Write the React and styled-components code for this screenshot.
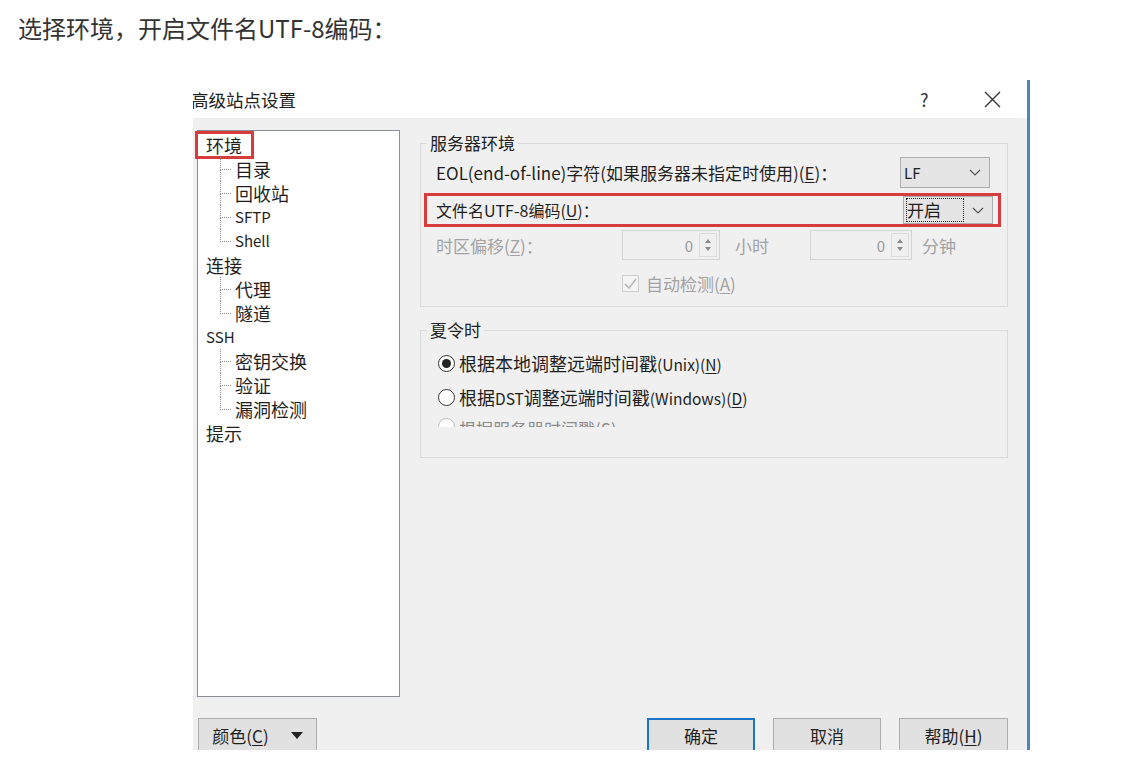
import styled, { createGlobalStyle } from "styled-components";

const GlobalStyle = createGlobalStyle`
  html, body {
    margin: 0;
    background: #fff;
  }
  body {
    font-family: "Noto Sans CJK SC", "Noto Sans", sans-serif;
    color: #1f1f1f;
  }
`;

const Intro = styled.p`
  margin: 0;
  padding: 13px 0 0 18px;
  height: 67px;
  font-size: 24px;
  line-height: 30px;
  color: #333;
`;

const Shot = styled.div`
  margin-left: 193px;
  width: 837px;
  height: 670px;
  display: flex;
  flex-direction: column;
  box-sizing: border-box;
  border-right: 3px solid #4a86bf;
  overflow: hidden;
`;

const TitleBar = styled.div`
  height: 38px;
  flex: none;
  display: flex;
  align-items: center;
  background: #fff;
  font-size: 17.5px;
  color: #222;
  span.title {
    margin-left: -2px;
    flex: 1;
  }
`;

const HelpMark = styled.span`
  width: 64px;
  font-size: 18px;
  color: #333;
`;

const CloseBox = styled.span`
  width: 43px;
  display: flex;
  align-items: center;
`;

const Body = styled.div`
  flex: 1;
  background: #f0f0f0;
  display: grid;
  grid-template-columns: 203px minmax(0, 1fr);
  grid-template-rows: 567px auto;
  column-gap: 20px;
  row-gap: 21px;
  padding: 12px 19px 0 4px;
  overflow: hidden;
`;

const TreeBox = styled.div`
  background: #fff;
  border: 1px solid #8a8f96;
  padding: 2px 0 0 8px;
  font-size: 18px;
  line-height: 24px;
`;

const TreeRow = styled.div`
  height: 24px;
  display: flex;
  align-items: stretch;
  white-space: nowrap;
  span.t {
    display: flex;
    align-items: center;
    font-size: ${(p) => (p.$latin ? 15 : 18)}px;
  }
`;

const Marked = styled.span`
  line-height: 22px;
  padding: 0 9px 0 8px;
  margin: 0 -9px 0 -8px;
  outline: 3px solid #d83b3b;
  align-self: center;
`;

const Branch = styled.span`
  width: 11px;
  margin: 0 4px 0 14px;
  display: flex;
  flex-direction: column;
  i {
    flex: 1;
    border-left: 1px dotted #8e8e8e;
  }
  i:first-child {
    border-bottom: 1px dotted #8e8e8e;
  }
  i:last-child {
    border-left-color: ${(p) => (p.$last ? "transparent" : "#8e8e8e")};
  }
`;

const Panel = styled.div`
  display: flex;
  flex-direction: column;
  font-size: 17px;
  min-width: 0;
`;

const Group = styled.fieldset`
  margin: ${(p) => p.$top || 0}px 0 0;
  padding: 0 0 ${(p) => p.$bottom || 0}px;
  border: 1px solid #dadada;
  min-width: 0;
  legend {
    margin-left: 6px;
    padding: 0 3px;
    font-size: 17px;
    line-height: 26px;
    color: #222;
  }
`;

const Row = styled.div`
  display: flex;
  align-items: center;
  height: ${(p) => p.$h || 31}px;
  margin-top: ${(p) => p.$mt || 0}px;
  padding: 0 17px 0 15px;
  color: ${(p) => (p.$disabled ? "#a3a3a3" : "#1f1f1f")};
  white-space: nowrap;
`;

const Flagged = styled.div`
  display: flex;
  align-items: center;
  height: 34px;
  box-sizing: border-box;
  margin: 5px 6px 0 3px;
  padding: 0 5px 0 9px;
  border: 3px solid #d83b3b;
  white-space: nowrap;
  font-size: 16px;
`;

const Grow = styled.span`
  flex: 1;
`;

const Key = styled.span`
  text-decoration: underline;
  text-underline-offset: 2px;
`;

const Combo = styled.div`
  width: 90px;
  height: ${(p) => p.$h || 31}px;
  flex: none;
  box-sizing: border-box;
  border: 1px solid #adadad;
  background: #e5e5e5;
  display: flex;
  align-items: center;
  justify-content: space-between;
  padding: 0 8px 0 3px;
  font-size: 15px;
`;

const Focused = styled.span`
  font-size: 17px;
  line-height: 22px;
  padding: 0 4px 0 0;
  outline: 1px dotted #222;
  width: 52px;
`;

const LabelCell = styled.span`
  width: 186px;
  flex: none;
`;

const Spin = styled.div`
  width: ${(p) => p.$w}px;
  height: 30px;
  flex: none;
  box-sizing: border-box;
  border: 1px solid #d4d4d4;
  background: #f0f0f0;
  display: flex;
  align-items: center;
  justify-content: flex-end;
  gap: 6px;
  padding-right: 2px;
  color: #9a9a9a;
  font-size: 15px;
`;

const SpinArrows = styled.span`
  width: 16px;
  height: 22px;
  border: 1px solid #dcdcdc;
  display: flex;
  align-items: center;
  justify-content: center;
`;

const UnitCell = styled.span`
  width: ${(p) => p.$w}px;
  padding-left: ${(p) => p.$pad}px;
  box-sizing: border-box;
  font-size: 17px;
  flex: none;
`;

const CheckRow = styled.div`
  display: flex;
  align-items: center;
  gap: 7px;
  height: 24px;
  margin-top: 11px;
  padding-left: 201px;
  color: #a3a3a3;
  font-size: 17px;
`;

const CheckBox = styled.span`
  width: 15px;
  height: 15px;
  border: 1px solid #cfcfcf;
  background: #f4f4f4;
  display: flex;
  align-items: center;
  justify-content: center;
`;

const RadioRow = styled.div`
  display: flex;
  align-items: center;
  gap: 4px;
  height: 34px;
  padding-left: 17px;
  font-size: 18px;
  white-space: nowrap;
  color: #1f1f1f;
  small {
    font-size: 15.5px;
  }
`;

const CutRow = styled.div`
  height: 34px;
  padding-left: 17px;
  overflow: hidden;
`;

const CutInner = styled.div`
  height: 9px;
  margin-top: 4px;
  overflow: hidden;
  display: flex;
  gap: 4px;
  font-size: 17px;
  line-height: 22px;
  color: #8d8d8d;
  white-space: nowrap;
`;

const Radio = styled.span`
  width: 17px;
  height: 17px;
  box-sizing: border-box;
  border-radius: 50%;
  border: 1px solid ${(p) => (p.$dim ? "#bbb" : "#333")};
  background: #fff;
  display: flex;
  align-items: center;
  justify-content: center;
  flex: none;
  &::after {
    content: "";
    width: 9px;
    height: 9px;
    border-radius: 50%;
    background: ${(p) => (p.$on ? "#222" : "transparent")};
  }
`;

const Footer = styled.div`
  grid-column: 1 / span 2;
  display: flex;
  justify-content: space-between;
  padding-left: 1px;
`;

const ButtonGroup = styled.div`
  display: flex;
  gap: 18px;
`;

const Button = styled.button`
  width: ${(p) => p.$w || 108}px;
  height: 40px;
  box-sizing: border-box;
  background: #e1e1e1;
  border: ${(p) => (p.$primary ? "2px solid #1a73c7" : "1px solid #adadad")};
  font-family: inherit;
  font-size: 17px;
  color: #1f1f1f;
  padding: 0 0 6px;
  display: flex;
  align-items: center;
  justify-content: center;
  gap: 22px;
`;

const Chevron = () => (
  <svg width="12" height="7" viewBox="0 0 12 7">
    <path d="M1 1l5 5 5-5" fill="none" stroke="#555" strokeWidth="1.2" />
  </svg>
);

const Arrows = () => (
  <svg width="8" height="16" viewBox="0 0 8 16">
    <path d="M4 2l3 4H1z" fill="#8a8a8a" />
    <path d="M4 14l3-4H1z" fill="#8a8a8a" />
  </svg>
);

const treeData = [
  { label: "环境", marked: true, children: ["目录", "回收站", "SFTP", "Shell"] },
  { label: "连接", children: ["代理", "隧道"] },
  { label: "SSH", children: ["密钥交换", "验证", "漏洞检测"] },
  { label: "提示", children: [] },
];

const isLatin = (s) => /^[A-Za-z]/.test(s);

function Tree() {
  return (
    <TreeBox>
      {treeData.map((node) => (
        <div key={node.label}>
          <TreeRow $latin={isLatin(node.label)}>
            {node.marked ? (
              <Marked>{node.label}</Marked>
            ) : (
              <span className="t">{node.label}</span>
            )}
          </TreeRow>
          {node.children.map((c, i) => (
            <TreeRow key={c} $latin={isLatin(c)}>
              <Branch $last={i === node.children.length - 1}>
                <i />
                <i />
              </Branch>
              <span className="t">{c}</span>
            </TreeRow>
          ))}
        </div>
      ))}
    </TreeBox>
  );
}

export default function App() {
  return (
    <>
      <GlobalStyle />
      <Intro>选择环境，开启文件名UTF-8编码：</Intro>
      <Shot>
        <TitleBar>
          <span className="title">高级站点设置</span>
          <HelpMark>?</HelpMark>
          <CloseBox>
            <svg width="17" height="17" viewBox="0 0 17 17">
              <path d="M1 1l15 15M16 1L1 16" stroke="#333" strokeWidth="1.4" />
            </svg>
          </CloseBox>
        </TitleBar>
        <Body>
          <Tree />
          <Panel>
            <Group $bottom={11}>
              <legend>服务器环境</legend>
              <Row $mt={1}>
                <span>
                  EOL(end-of-line)字符(如果服务器未指定时使用)(<Key>E</Key>)：
                </span>
                <Grow />
                <Combo>
                  <span>LF</span>
                  <Chevron />
                </Combo>
              </Row>
              <Flagged>
                <span>
                  文件名UTF-8编码(<Key>U</Key>)：
                </span>
                <Grow />
                <Combo $h={28}>
                  <Focused>开启</Focused>
                  <Chevron />
                </Combo>
              </Flagged>
              <Row $h={30} $mt={3} $disabled>
                <LabelCell>
                  时区偏移(<Key>Z</Key>)：
                </LabelCell>
                <Spin $w={98}>
                  0
                  <SpinArrows>
                    <Arrows />
                  </SpinArrows>
                </Spin>
                <UnitCell $w={90} $pad={15}>小时</UnitCell>
                <Spin $w={102}>
                  0
                  <SpinArrows>
                    <Arrows />
                  </SpinArrows>
                </Spin>
                <UnitCell $w={80} $pad={10}>分钟</UnitCell>
              </Row>
              <CheckRow>
                <CheckBox>
                  <svg width="13" height="11" viewBox="0 0 13 11">
                    <path d="M1 6l4 4 7-9" fill="none" stroke="#b5b5b5" strokeWidth="1.5" />
                  </svg>
                </CheckBox>
                <span>
                  自动检测(<Key>A</Key>)
                </span>
              </CheckRow>
            </Group>
            <Group $top={10} $bottom={9}>
              <legend>夏令时</legend>
              <RadioRow style={{ marginTop: 3 }}>
                <Radio $on />
                <span>
                  根据本地调整远端时间戳<small>(Unix)(<Key>N</Key>)</small>
                </span>
              </RadioRow>
              <RadioRow>
                <Radio />
                <span>
                  根据<small>DST</small>调整远端时间戳<small>(Windows)(<Key>D</Key>)</small>
                </span>
              </RadioRow>
              <CutRow>
                <CutInner>
                  <Radio $dim />
                  <span>根据服务器时间戳(S)</span>
                </CutInner>
              </CutRow>
            </Group>
          </Panel>
          <Footer>
            <Button $w={119}>
              <span>
                颜色(<Key>C</Key>)
              </span>
              <svg width="12" height="7" viewBox="0 0 12 7">
                <path d="M0 0h12L6 7z" fill="#222" />
              </svg>
            </Button>
            <ButtonGroup>
              <Button $primary>确定</Button>
              <Button>取消</Button>
              <Button $w={109}>
                <span>
                  帮助(<Key>H</Key>)
                </span>
              </Button>
            </ButtonGroup>
          </Footer>
        </Body>
      </Shot>
    </>
  );
}
